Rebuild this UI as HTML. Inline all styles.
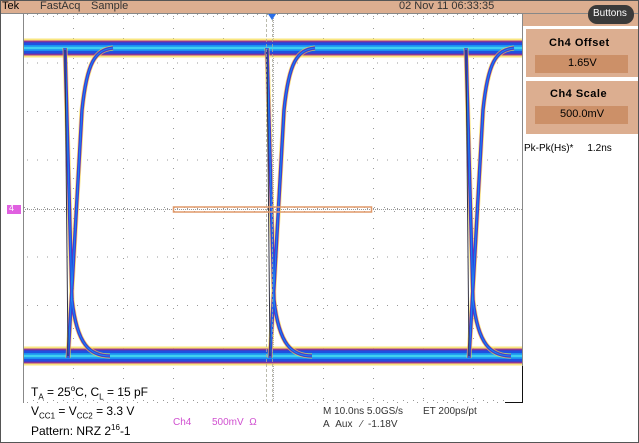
<!DOCTYPE html>
<html><head><meta charset="utf-8"><style>
html,body{margin:0;padding:0;background:#fff;}
body{width:639px;height:443px;position:relative;overflow:hidden;font-family:"Liberation Sans",sans-serif;}
.t{position:absolute;white-space:nowrap;}
</style></head><body>
<svg width="639" height="443" style="position:absolute;left:0;top:0">
<defs>
<pattern id="vd" width="50" height="10" patternUnits="userSpaceOnUse" x="23" y="14"><rect x="0" y="4" width="1" height="1" fill="#999"/></pattern>
<pattern id="hd" width="10" height="48.5" patternUnits="userSpaceOnUse" x="23" y="14"><rect x="4" y="0" width="1" height="1" fill="#999"/></pattern>
<g id="tx">
<path d="M3 358L17 110C22 62 30 50 48 48M0 48L7 300C12 345 25 356 45 356" stroke="#f8d840" stroke-width="5" stroke-opacity="0.7"/>
<path d="M3 358L17 110C22 62 30 50 48 48M0 48L7 300C12 345 25 356 45 356" stroke="#8030a8" stroke-width="3.5"/>
<path d="M3 358L17 110C22 62 30 50 48 48M0 48L7 300C12 345 25 356 45 356" stroke="#2448e0" stroke-width="2.5"/>
<path d="M3 358L17 110C22 62 30 50 48 48M0 48L7 300C12 345 25 356 45 356" stroke="#2090f0" stroke-width="0.8"/>
<path d="M0 50L3 356" stroke="#334" stroke-width="1"/>
</g>
</defs>
<rect x="0" y="0" width="639" height="443" fill="#fff"/>
<rect x="0" y="0" width="639" height="13" fill="#dcae90"/>
<line x1="0" y1="13.5" x2="639" y2="13.5" stroke="#888"/>
<rect x="23" y="14" width="500" height="389" fill="url(#vd)"/>
<rect x="23" y="14" width="500" height="389" fill="url(#hd)"/>
<line x1="23" y1="209.5" x2="522" y2="209.5" stroke="#999" stroke-dasharray="1 1"/>
<line x1="273.5" y1="14" x2="273.5" y2="402" stroke="#aaa" stroke-dasharray="1 1"/>
<path d="M23 207.5H522M23 211.5H522" stroke="#999" stroke-dasharray="1 9" stroke-dashoffset="-1"/>
<path d="M23 16.5H522M23 400.5H522" stroke="#999" stroke-dasharray="1 9"/>
<g fill="none">
<path d="M23 48H522" stroke="#f8e060" stroke-width="19" stroke-opacity="0.8"/>
<path d="M23 48H522" stroke="#b04080" stroke-width="15"/>
<path d="M23 48H522" stroke="#6030b0" stroke-width="13"/>
<path d="M23 48H522" stroke="#2050e0" stroke-width="11"/>
<path d="M23 48H522" stroke="#1a90f0" stroke-width="6"/>
<path d="M23 48H522" stroke="#40d0f0" stroke-width="2.5"/>
<path d="M23 356H522" stroke="#f8e060" stroke-width="19" stroke-opacity="0.8"/>
<path d="M23 356H522" stroke="#b04080" stroke-width="15"/>
<path d="M23 356H522" stroke="#6030b0" stroke-width="13"/>
<path d="M23 356H522" stroke="#2050e0" stroke-width="11"/>
<path d="M23 356H522" stroke="#1a90f0" stroke-width="6"/>
<path d="M23 356H522" stroke="#40d0f0" stroke-width="2.5"/>
</g>
<g fill="none">
<use href="#tx" transform="translate(65,0)"/>
<use href="#tx" transform="translate(267,0)"/>
<use href="#tx" transform="translate(466,0)"/>
</g>
<path d="M266.5 14V402M272.5 14V402" stroke="#aa9" stroke-dasharray="3 2" stroke-opacity="0.8"/>
<path d="M268 14l8 0-4 6z" fill="#2a6ee8"/>
<rect x="173.5" y="207" width="198" height="5" fill="none" stroke="#e09868" stroke-width="1.5"/>
<line x1="23.5" y1="14" x2="23.5" y2="403" stroke="#888"/>
<line x1="522.5" y1="14" x2="522.5" y2="402" stroke="#888"/>
<rect x="505" y="366" width="17" height="36" fill="#fff"/>
<path d="M505 402.5H522.5V366" stroke="#111" fill="none"/>
<rect x="7" y="205" width="14" height="9" fill="#e060e0"/>
<rect x="523" y="14" width="116" height="120" fill="#dcae90"/>
<rect x="523" y="26" width="116" height="3" fill="#fff"/>
<rect x="523" y="29" width="3" height="105" fill="#fff"/>
<rect x="523" y="77" width="116" height="4" fill="#fff"/>
<rect x="535" y="55" width="93" height="18" fill="#cc9068"/>
<rect x="535" y="106" width="93" height="18" fill="#cc9068"/>
<rect x="588" y="5" width="46" height="19" rx="9" fill="#3a3a3a"/>
<rect x="0.5" y="0.5" width="638" height="442" fill="none" stroke="#555"/>
</svg>
<div class="t" style="left:2px;top:0;font-size:11px;">Tek</div>
<div class="t" style="left:40px;top:0;font-size:11px;color:#333">FastAcq</div>
<div class="t" style="left:91px;top:0;font-size:11px;color:#333">Sample</div>
<div class="t" style="left:399px;top:0;font-size:11px;color:#333">02 Nov 11 06:33:35</div>
<div class="t" style="left:593px;top:8px;font-size:10px;color:#fff">Buttons</div>
<div class="t" style="left:9px;top:203px;font-size:9px;color:#fff">4</div>
<div class="t" style="left:549px;top:37px;font-size:11px;font-weight:bold;letter-spacing:0.5px">Ch4 Offset</div>
<div class="t" style="left:568px;top:57px;font-size:11px;">1.65V</div>
<div class="t" style="left:550px;top:88px;font-size:11px;font-weight:bold;letter-spacing:0.5px">Ch4 Scale</div>
<div class="t" style="left:560px;top:108px;font-size:11px;">500.0mV</div>
<div class="t" style="left:524px;top:143px;font-size:10px;">Pk-Pk(Hs)*&nbsp;&nbsp;&nbsp;&nbsp;&nbsp;1.2ns</div>
<div class="t" style="left:31px;top:384px;font-size:12px;">T<sub style="font-size:8px">A</sub> = 25<sup style="font-size:8px">o</sup>C, C<sub style="font-size:8px">L</sub> = 15 pF</div>
<div class="t" style="left:31px;top:404px;font-size:12px;">V<sub style="font-size:8px">CC1</sub> = V<sub style="font-size:8px">CC2</sub> = 3.3 V</div>
<div class="t" style="left:31px;top:423px;font-size:12px;">Pattern: NRZ 2<sup style="font-size:8px">16</sup>-1</div>
<div class="t" style="left:173px;top:417px;font-size:10px;color:#d050d0">Ch4</div>
<div class="t" style="left:212px;top:417px;font-size:10px;color:#d050d0">500mV&nbsp;&nbsp;Ω</div>
<div class="t" style="left:323px;top:406px;font-size:10px;color:#333">M 10.0ns 5.0GS/s</div>
<div class="t" style="left:423px;top:406px;font-size:10px;color:#333">ET 200ps/pt</div>
<div class="t" style="left:323px;top:419px;font-size:10px;color:#333">A&nbsp;&nbsp;Aux&nbsp;&nbsp;&nbsp;⁄&nbsp;&nbsp;-1.18V</div>
</body></html>
